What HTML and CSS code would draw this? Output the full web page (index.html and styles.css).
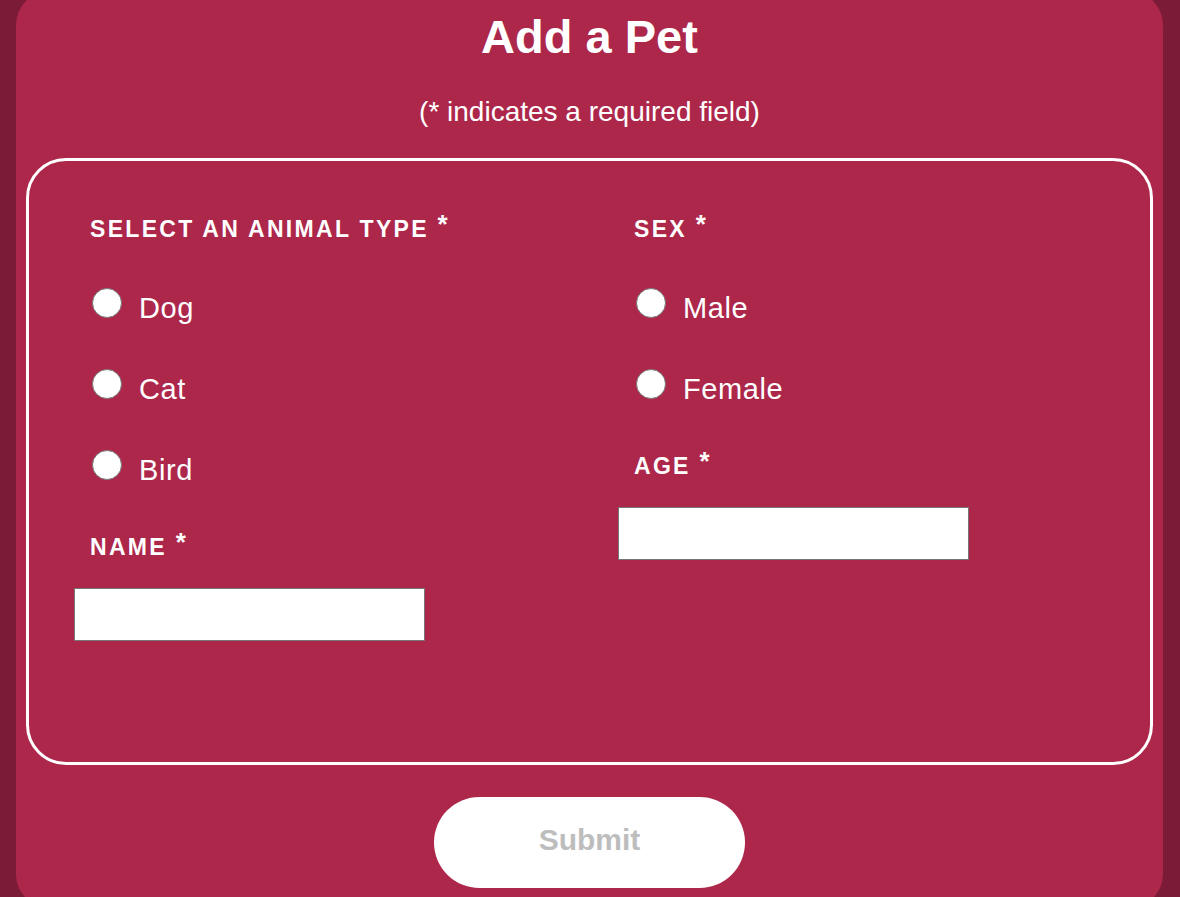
FILE: index.html
```html
<!DOCTYPE html>
<html lang="en">
<head>
<meta charset="utf-8">
<title>Add a Pet</title>
<link rel="stylesheet" href="styles.css">
</head>
<body>
<div class="page">
  <main class="card">
    <h1 class="title">Add a Pet</h1>
    <p class="note">(* indicates a required field)</p>
    <form class="form">
      <div class="panel">
        <div class="col">
          <div class="label">Select an animal type <span class="req">*</span></div>
          <label class="option"><input class="radio" type="radio" name="type"><span class="opt-text">Dog</span></label>
          <label class="option"><input class="radio" type="radio" name="type"><span class="opt-text">Cat</span></label>
          <label class="option"><input class="radio" type="radio" name="type"><span class="opt-text">Bird</span></label>
          <label class="label label-input" for="pet-name">Name <span class="req">*</span></label>
          <input class="text-input" id="pet-name" type="text">
        </div>
        <div class="col">
          <div class="label">Sex <span class="req">*</span></div>
          <label class="option"><input class="radio" type="radio" name="sex"><span class="opt-text">Male</span></label>
          <label class="option"><input class="radio" type="radio" name="sex"><span class="opt-text">Female</span></label>
          <label class="label label-input" for="pet-age">Age <span class="req">*</span></label>
          <input class="text-input" id="pet-age" type="text">
        </div>
      </div>
      <div class="actions">
        <button class="submit" type="button">Submit</button>
      </div>
    </form>
  </main>
</div>
</body>
</html>
```

FILE: styles.css
```css
html, body {
  margin: 0;
  padding: 0;
}

body {
  background: #7c1b38;
  font-family: "Liberation Sans", Arial, sans-serif;
  color: #ffffff;
  height: 897px;
  overflow: hidden;
}

.page {
  padding: 0 17px 0 16px;
}

.card {
  background: #ad274b;
  border-radius: 34px;
  margin-top: -9px;
  padding: 19px 10px 20px;
}

.title {
  margin: 0;
  text-align: center;
  font-size: 47px;
  line-height: 53px;
  font-weight: 700;
}

.note {
  margin: 33px 0 0;
  text-align: center;
  font-size: 28px;
  line-height: 32px;
}

.form {
  margin: 30px 0 0;
}

.panel {
  border: 3px solid #ffffff;
  border-radius: 40px;
  padding: 55px 46px 121px;
  display: grid;
  grid-template-columns: 544px 1fr;
}

.col {
  display: flex;
  flex-direction: column;
  align-items: flex-start;
}

.label {
  display: block;
  padding-left: 15px;
  font-size: 23px;
  line-height: 26px;
  font-weight: 700;
  letter-spacing: 2.3px;
  text-transform: uppercase;
  margin-bottom: 46px;
}

.label-input {
  margin-top: 3px;
  margin-bottom: 28px;
}

.req {
  font-size: 26px;
  line-height: 0;
  letter-spacing: 0;
  vertical-align: 4px;
}

.option {
  display: flex;
  align-items: flex-start;
  height: 81px;
  padding-left: 15px;
  font-size: 29px;
  letter-spacing: 0.6px;
  cursor: pointer;
}

.radio {
  appearance: none;
  -webkit-appearance: none;
  width: 30px;
  height: 30px;
  margin: 0 17px 0 2px;
  border: 1px solid #767676;
  border-radius: 50%;
  background: #ffffff;
  box-sizing: border-box;
  flex: none;
}

.opt-text {
  display: block;
  line-height: 32px;
  margin-top: 4px;
}

.text-input {
  width: 351px;
  height: 53px;
  box-sizing: border-box;
  margin: 0 0 0 -1px;
  border: 1px solid #767676;
  background: #ffffff;
  padding: 0 8px;
  font-size: 20px;
  font-family: inherit;
}

.actions {
  display: flex;
  justify-content: center;
  margin-top: 32px;
}

.submit {
  width: 311px;
  height: 91px;
  border: none;
  border-radius: 46px;
  background: #ffffff;
  color: #bdbdbd;
  font-family: inherit;
  font-size: 30px;
  font-weight: 700;
  padding: 0 0 5px;
  cursor: pointer;
}
```
